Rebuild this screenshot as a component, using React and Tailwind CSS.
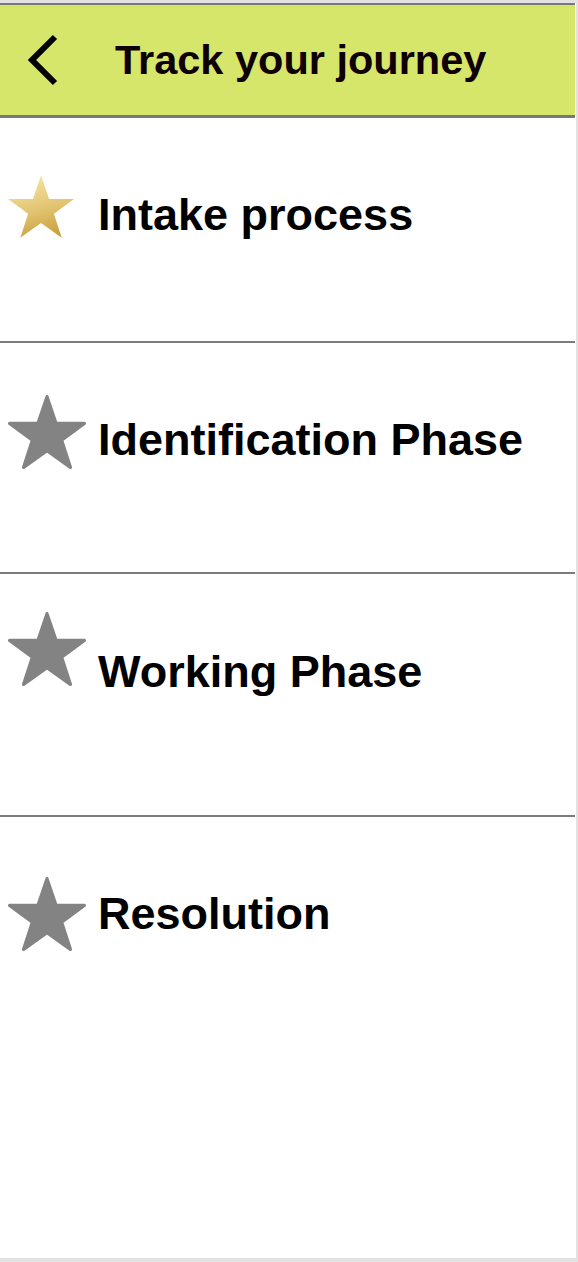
function Star({ gold, className }) {
    return (
        <svg viewBox={gold ? '4 3 92 87' : '2 1 96 91'} className={className}>
            {gold && (
                <defs>
                    <linearGradient id="gold" x1="0.3" y1="0" x2="0.6" y2="1">
                        <stop offset="0" stopColor="#f6e6a6" />
                        <stop offset="0.55" stopColor="#e2c472" />
                        <stop offset="1" stopColor="#c99f3c" />
                    </linearGradient>
                </defs>
            )}
            <polygon
                points="50,3 61.2,36 96,36 68,56.5 78.8,90 50,69.5 21.2,90 32,56.5 4,36 38.8,36"
                fill={gold ? 'url(#gold)' : '#838383'}
                stroke={gold ? 'none' : '#838383'}
                strokeWidth={gold ? 0 : 4}
                strokeLinejoin="round"
            />
        </svg>
    )
}

const phases = [
    { label: 'Intake process', gold: true, h: 'h-[225px]', star: 'mt-[57px] w-[66px] h-[63px]', text: 'mt-[74px] ml-[24px]' },
    { label: 'Identification Phase', h: 'h-[231px]', star: 'mt-[52px] w-[78px] h-[74px]', text: 'mt-[74px] ml-[12px]' },
    { label: 'Working Phase', h: 'h-[243px]', star: 'mt-[38px] w-[78px] h-[74px]', text: 'mt-[75px] ml-[12px]' },
    { label: 'Resolution', h: 'h-[434px]', star: 'mt-[60px] w-[78px] h-[74px]', text: 'mt-[74px] ml-[12px]' },
]

export default function App() {
    return (
        <div className="w-[578px] h-[1262px] bg-[#e2e2e2] pt-[3px] pb-[4px] pr-[2px] font-['Liberation_Sans',Arial,sans-serif]">
            <div className="bg-white h-full flex flex-col">
                <div className="w-[575px] border-t-2 border-b-[3px] border-[#787878] bg-[#d6e66b] h-[115px] flex items-center">
                    <svg viewBox="0 0 40 52" className="ml-[22px] w-[40px] h-[52px] shrink-0">
                        <polyline points="33,3 10,26 33,49" fill="none" stroke="#000" strokeWidth="6" strokeLinecap="butt" strokeLinejoin="miter" />
                    </svg>
                    <h1 className="ml-[53px] text-[41.5px] leading-none font-bold text-[#0e0000]">Track your journey</h1>
                </div>
                {phases.map((p, i) => (
                    <div key={p.label} className={`${p.h} w-[575px] ${i < phases.length - 1 ? 'border-b-2 border-[#7c7c7c]' : ''} flex items-start shrink-0`}>
                        <Star gold={p.gold} className={`ml-[8px] shrink-0 ${p.star}`} />
                        <span className={`${p.text} text-[45px] leading-none font-bold text-black`}>{p.label}</span>
                    </div>
                ))}
            </div>
        </div>
    )
}
